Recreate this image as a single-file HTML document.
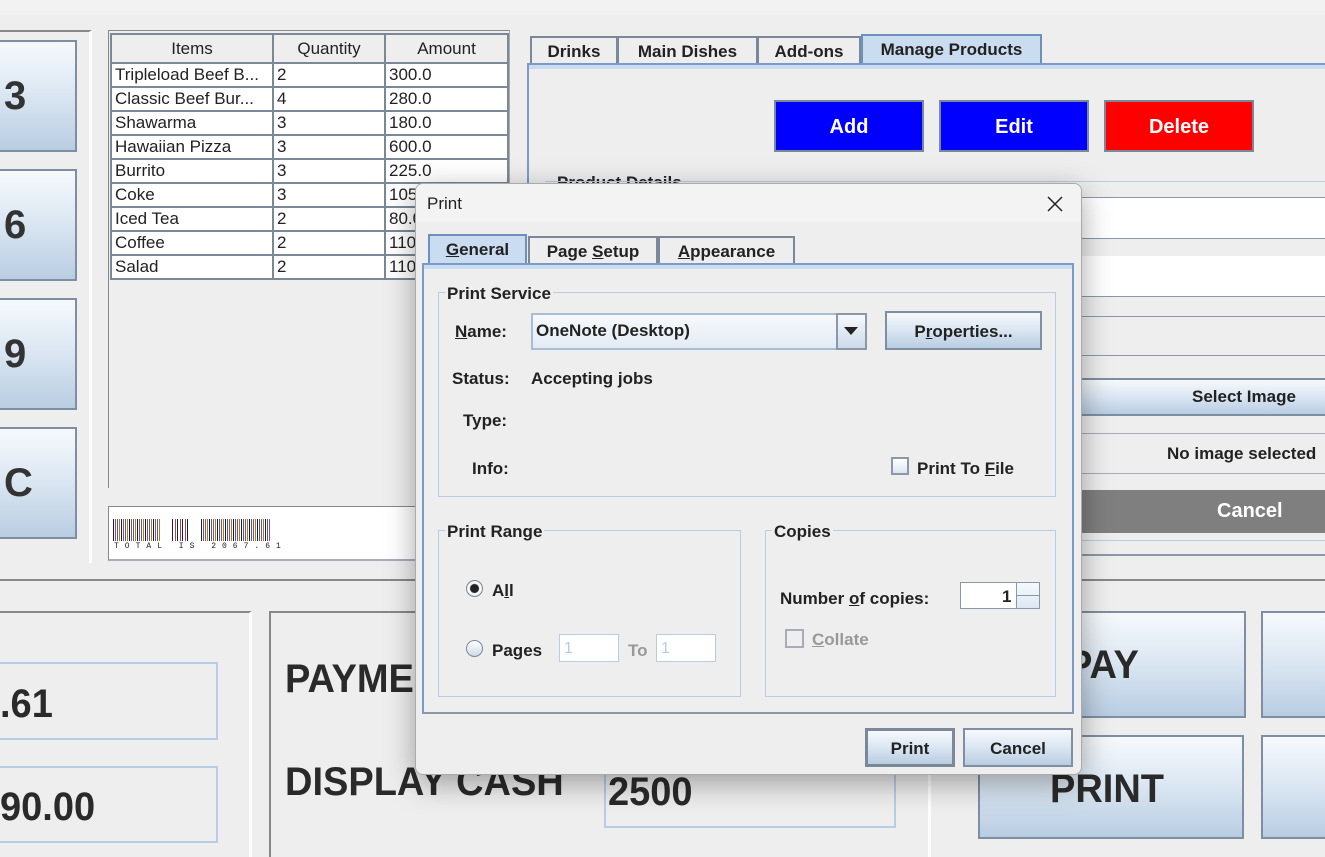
<!DOCTYPE html>
<html><head><meta charset="utf-8"><style>
*{box-sizing:border-box;margin:0;padding:0}
body{width:1325px;height:857px;overflow:hidden;background:#eeeeee;font-family:"Liberation Sans",sans-serif;position:relative;color:#222}
.a{position:absolute}
.gb{background:linear-gradient(#f6f9fc,#dde8f3 45%,#b9cde2);border:2px solid #7f8fa3}
.num{font-weight:bold;font-size:40px;color:#333;padding-left:6px;display:flex;align-items:center}
table{border-collapse:collapse;font-size:17px}
td{border:2px solid #7b8898;background:#fff;height:24px;padding:0 3px;white-space:nowrap;overflow:hidden;line-height:20px}
th{font-weight:normal;border:2px solid #7b8898;background:#eeeeee;height:29px}
.b{font-weight:bold}
.tab{position:absolute;border:2px solid #7b8898;border-bottom:none;font-weight:bold;font-size:17px;text-align:center;line-height:28px;background:#eee}
.grp{position:absolute;border:1px solid #b8cde3}
.gl{position:absolute;background:#eee;font-weight:bold;font-size:17px;padding:0 2px}
.lab{position:absolute;font-weight:bold;font-size:17px}
u{text-decoration:underline}
.big{font-weight:bold;font-size:40px;color:#2a2a2a;transform:scaleX(.95);transform-origin:left;white-space:nowrap}
</style></head><body>
<div class="a" style="left:0;top:0;width:1325px;height:15px;background:#f2f2f2"></div>
<div class="a" style="left:0;top:30px;width:92px;height:533px;border-top:2px solid #888;border-right:3px solid #fff"></div>
<div class="a gb num" style="left:-4px;top:40px;width:81px;height:112px">3</div>
<div class="a gb num" style="left:-4px;top:169px;width:81px;height:112px">6</div>
<div class="a gb num" style="left:-4px;top:298px;width:81px;height:112px">9</div>
<div class="a gb num" style="left:-4px;top:427px;width:81px;height:112px">C</div>
<div class="a" style="left:108px;top:30px;width:402px;height:458px;border-left:1px solid #888;border-top:1px solid #888;border-right:1px solid #aaa"></div>
<table class="a" style="left:110px;top:33px;width:399px">
<tr><th style="width:162px">Items</th><th style="width:112px">Quantity</th><th>Amount</th></tr>
<tr><td>Tripleload Beef B...</td><td>2</td><td>300.0</td></tr>
<tr><td>Classic Beef Bur...</td><td>4</td><td>280.0</td></tr>
<tr><td>Shawarma</td><td>3</td><td>180.0</td></tr>
<tr><td>Hawaiian Pizza</td><td>3</td><td>600.0</td></tr>
<tr><td>Burrito</td><td>3</td><td>225.0</td></tr>
<tr><td>Coke</td><td>3</td><td>105.0</td></tr>
<tr><td>Iced Tea</td><td>2</td><td>80.0</td></tr>
<tr><td>Coffee</td><td>2</td><td>110.0</td></tr>
<tr><td>Salad</td><td>2</td><td>110.0</td></tr>
</table>
<div class="a" style="left:108px;top:506px;width:320px;height:55px;background:#fff;border:1px solid #888;border-bottom:2px solid #aab"></div>
<div class="a" style="left:113px;top:519px;width:48px;height:22px;background:repeating-linear-gradient(90deg,#222 0 1px,#fff 1px 2px,#a46 2px 3px,#fff 3px 4px,#36a 4px 5px,#fff 5px 6px,#a72 6px 7px,#fff 7px 8px)"></div>
<div class="a" style="left:172px;top:519px;width:18px;height:22px;background:repeating-linear-gradient(90deg,#222 0 1px,#fff 1px 3px,#a46 3px 4px,#fff 4px 5px)"></div>
<div class="a" style="left:201px;top:519px;width:70px;height:22px;background:repeating-linear-gradient(90deg,#222 0 1px,#fff 1px 2px,#36a 2px 3px,#fff 3px 4px,#a46 4px 5px,#fff 5px 6px,#a72 6px 7px,#fff 7px 8px)"></div>
<div class="a" style="left:114px;top:542px;font-size:8px;letter-spacing:6px;font-family:'Liberation Mono',monospace">TOTAL IS 2067.61</div>
<div class="a" style="left:0;top:579px;width:1325px;height:2px;background:#888"></div>
<div class="a" style="left:0;top:611px;width:252px;height:246px;border-top:2px solid #888;border-right:3px solid #fff"></div>
<div class="a" style="left:-2px;top:662px;width:220px;height:78px;border:2px solid #b8cde3"></div>
<div class="a big" style="left:0;top:682px">.61</div>
<div class="a" style="left:-2px;top:766px;width:220px;height:77px;border:2px solid #b8cde3"></div>
<div class="a big" style="left:0;top:785px">90.00</div>
<div class="a" style="left:269px;top:611px;width:662px;height:246px;border-top:2px solid #888;border-left:2px solid #888;border-right:3px solid #fff"></div>
<div class="a big" style="left:285px;top:657px">PAYME</div>
<div class="a big" style="left:285px;top:760px">DISPLAY CASH</div>
<div class="a" style="left:604px;top:770px;width:292px;height:58px;border:2px solid #b8cde3"></div>
<div class="a big" style="left:608px;top:770px">2500</div>
<div class="a gb" style="left:979px;top:611px;width:267px;height:107px"></div>
<div class="a big" style="left:1067px;top:643px">PAY</div>
<div class="a gb" style="left:1261px;top:611px;width:70px;height:107px"></div>
<div class="a gb" style="left:978px;top:735px;width:266px;height:104px"></div>
<div class="a big" style="left:1050px;top:767px">PRINT</div>
<div class="a gb" style="left:1261px;top:735px;width:70px;height:104px"></div>
<div class="tab" style="left:530px;top:36px;width:88px;height:28px">Drinks</div>
<div class="tab" style="left:617px;top:36px;width:141px;height:28px">Main Dishes</div>
<div class="tab" style="left:757px;top:36px;width:104px;height:28px">Add-ons</div>
<div class="tab" style="left:861px;top:34px;width:181px;height:30px;background:#c9dcf0;border-color:#6f8fc0">Manage Products</div>
<div class="a" style="left:527px;top:63px;width:800px;height:500px;border-left:2px solid #7b9ac8;border-top:2px solid #7b9ac8"></div>
<div class="a" style="left:529px;top:65px;width:796px;height:4px;background:#c9dcf0"></div>
<div class="a" style="left:774px;top:100px;width:150px;height:52px;background:#0000ff;border:2px solid #7b8898;color:#fff;font-weight:bold;font-size:20px;text-align:center;line-height:50px">Add</div>
<div class="a" style="left:939px;top:100px;width:150px;height:52px;background:#0000ff;border:2px solid #7b8898;color:#fff;font-weight:bold;font-size:20px;text-align:center;line-height:50px">Edit</div>
<div class="a" style="left:1104px;top:100px;width:150px;height:52px;background:#ff0000;border:2px solid #7b8898;color:#fff;font-weight:bold;font-size:20px;text-align:center;line-height:50px">Delete</div>
<div class="a b" style="left:557px;top:173px;font-size:17px">Product Details</div>
<div class="a" style="left:545px;top:181px;width:780px;height:1px;background:#bccde0"></div>
<div class="a" style="left:1075px;top:197px;width:252px;height:42px;background:#fff;border:1px solid #8a98a8"></div>
<div class="a" style="left:1075px;top:256px;width:252px;height:41px;background:#fff;border-bottom:1px solid #8a98a8"></div>
<div class="a" style="left:1075px;top:316px;width:252px;height:40px;border:1px solid #8a98a8;border-right:none"></div>
<div class="a gb" style="left:1075px;top:378px;width:252px;height:38px;font-weight:bold;font-size:17px;padding-left:115px;line-height:34px">Select Image</div>
<div class="a b" style="left:1075px;top:433px;width:252px;height:41px;border-top:1px solid #aab;border-bottom:1px solid #aab;font-size:17px;padding-left:92px;line-height:40px;white-space:nowrap;overflow:hidden">No image selected</div>
<div class="a b" style="left:1075px;top:490px;width:252px;height:43px;background:#7f7f7f;color:#fff;font-size:20px;padding-left:142px;line-height:43px">Cancel</div>
<div class="a" style="left:1075px;top:540px;width:252px;height:16px;border-top:1px solid #b8cde3;border-bottom:2px solid #8a98a8"></div>
<div class="a" style="left:415px;top:183px;width:667px;height:592px;background:#eeeeee;border:1px solid #aaa;border-radius:8px;box-shadow:0 8px 30px rgba(0,0,0,.35);overflow:hidden">
<div class="a" style="left:0;top:0;width:667px;height:38px;background:#f3f3f3"></div>
<div class="a" style="left:11px;top:10px;font-size:17px">Print</div>
<svg class="a" style="left:630px;top:11px" width="18" height="18"><path d="M2 2L16 16M16 2L2 16" stroke="#222" stroke-width="1.5"/></svg>
</div>
<div class="tab" style="left:428px;top:234px;width:99px;height:31px;background:#c9dcf0;border:2px solid #6f8fc0;border-bottom:none"><u>G</u>eneral</div>
<div class="tab" style="left:528px;top:236px;width:130px;height:28px">Page <u>S</u>etup</div>
<div class="tab" style="left:658px;top:236px;width:137px;height:28px"><u>A</u>ppearance</div>
<div class="a" style="left:422px;top:263px;width:652px;height:451px;border:2px solid #7b9ac8;border-bottom-color:#8a98a8"></div>
<div class="a" style="left:424px;top:265px;width:648px;height:4px;background:#c9dcf0"></div>
<div class="grp" style="left:438px;top:292px;width:618px;height:205px"></div>
<div class="gl" style="left:445px;top:284px">Print Service</div>
<div class="lab" style="left:455px;top:322px"><u>N</u>ame:</div>
<div class="a" style="left:531px;top:313px;width:336px;height:37px;background:linear-gradient(#f7f9fc,#e3ebf4);border:2px solid #a8bcd4"></div>
<div class="a b" style="left:536px;top:321px;font-size:17px">OneNote (Desktop)</div>
<div class="a" style="left:836px;top:313px;width:31px;height:37px;border:2px solid #8a98a8;background:linear-gradient(#f6f9fc,#ccdaea)"></div>
<svg class="a" style="left:843px;top:326px" width="16" height="10"><path d="M1 1H15L8 9Z" fill="#222"/></svg>
<div class="a gb" style="left:885px;top:311px;width:157px;height:39px;font-weight:bold;font-size:17px;text-align:center;line-height:38px">P<u>r</u>operties...</div>
<div class="lab" style="left:452px;top:369px">Status:</div>
<div class="lab" style="left:531px;top:369px">Accepting jobs</div>
<div class="lab" style="left:463px;top:411px">Type:</div>
<div class="lab" style="left:472px;top:459px">Info:</div>
<div class="a" style="left:891px;top:457px;width:18px;height:18px;border:2px solid #8a98a8;background:linear-gradient(#fff,#dde6ef)"></div>
<div class="lab" style="left:917px;top:459px">Print To <u>F</u>ile</div>
<div class="grp" style="left:438px;top:530px;width:303px;height:167px"></div>
<div class="gl" style="left:445px;top:522px">Print Range</div>
<div class="a" style="left:466px;top:580px;width:17px;height:17px;border-radius:50%;border:1px solid #7b8898;background:radial-gradient(#222 0 4px,#fff 5px,#d0dae6)"></div>
<div class="lab" style="left:492px;top:581px">A<u>l</u>l</div>
<div class="a" style="left:466px;top:640px;width:17px;height:17px;border-radius:50%;border:1px solid #7b8898;background:linear-gradient(#fff,#d0dae6)"></div>
<div class="lab" style="left:492px;top:641px">Pa<u>g</u>es</div>
<div class="a" style="left:559px;top:634px;width:60px;height:28px;background:#fff;border:1px solid #b8cde3;color:#b8cde3;font-size:16px;padding:5px 4px">1</div>
<div class="lab" style="left:628px;top:641px;color:#999">To</div>
<div class="a" style="left:656px;top:634px;width:60px;height:28px;background:#fff;border:1px solid #b8cde3;color:#b8cde3;font-size:16px;padding:5px 4px">1</div>
<div class="grp" style="left:765px;top:530px;width:291px;height:167px"></div>
<div class="gl" style="left:772px;top:522px">Copies</div>
<div class="lab" style="left:780px;top:589px">Number <u>o</u>f copies:</div>
<div class="a" style="left:960px;top:582px;width:80px;height:27px;background:#fff;border:1px solid #8a98a8"></div>
<div class="lab" style="left:1002px;top:587px">1</div>
<div class="a" style="left:1016px;top:582px;width:24px;height:27px;border:1px solid #8a98a8;background:linear-gradient(#f6f9fc,#dde8f3)"></div>
<div class="a" style="left:1016px;top:595px;width:24px;height:1px;background:#8a98a8"></div>
<div class="a" style="left:785px;top:629px;width:19px;height:19px;border:2px solid #aab"></div>
<div class="lab" style="left:812px;top:630px;color:#999"><u>C</u>ollate</div>
<div class="a gb" style="left:865px;top:728px;width:90px;height:39px;border:3px solid #7b8898;font-weight:bold;font-size:17px;text-align:center;line-height:35px">Print</div>
<div class="a gb" style="left:963px;top:728px;width:110px;height:39px;font-weight:bold;font-size:17px;text-align:center;line-height:37px">Cancel</div>
</body></html>
